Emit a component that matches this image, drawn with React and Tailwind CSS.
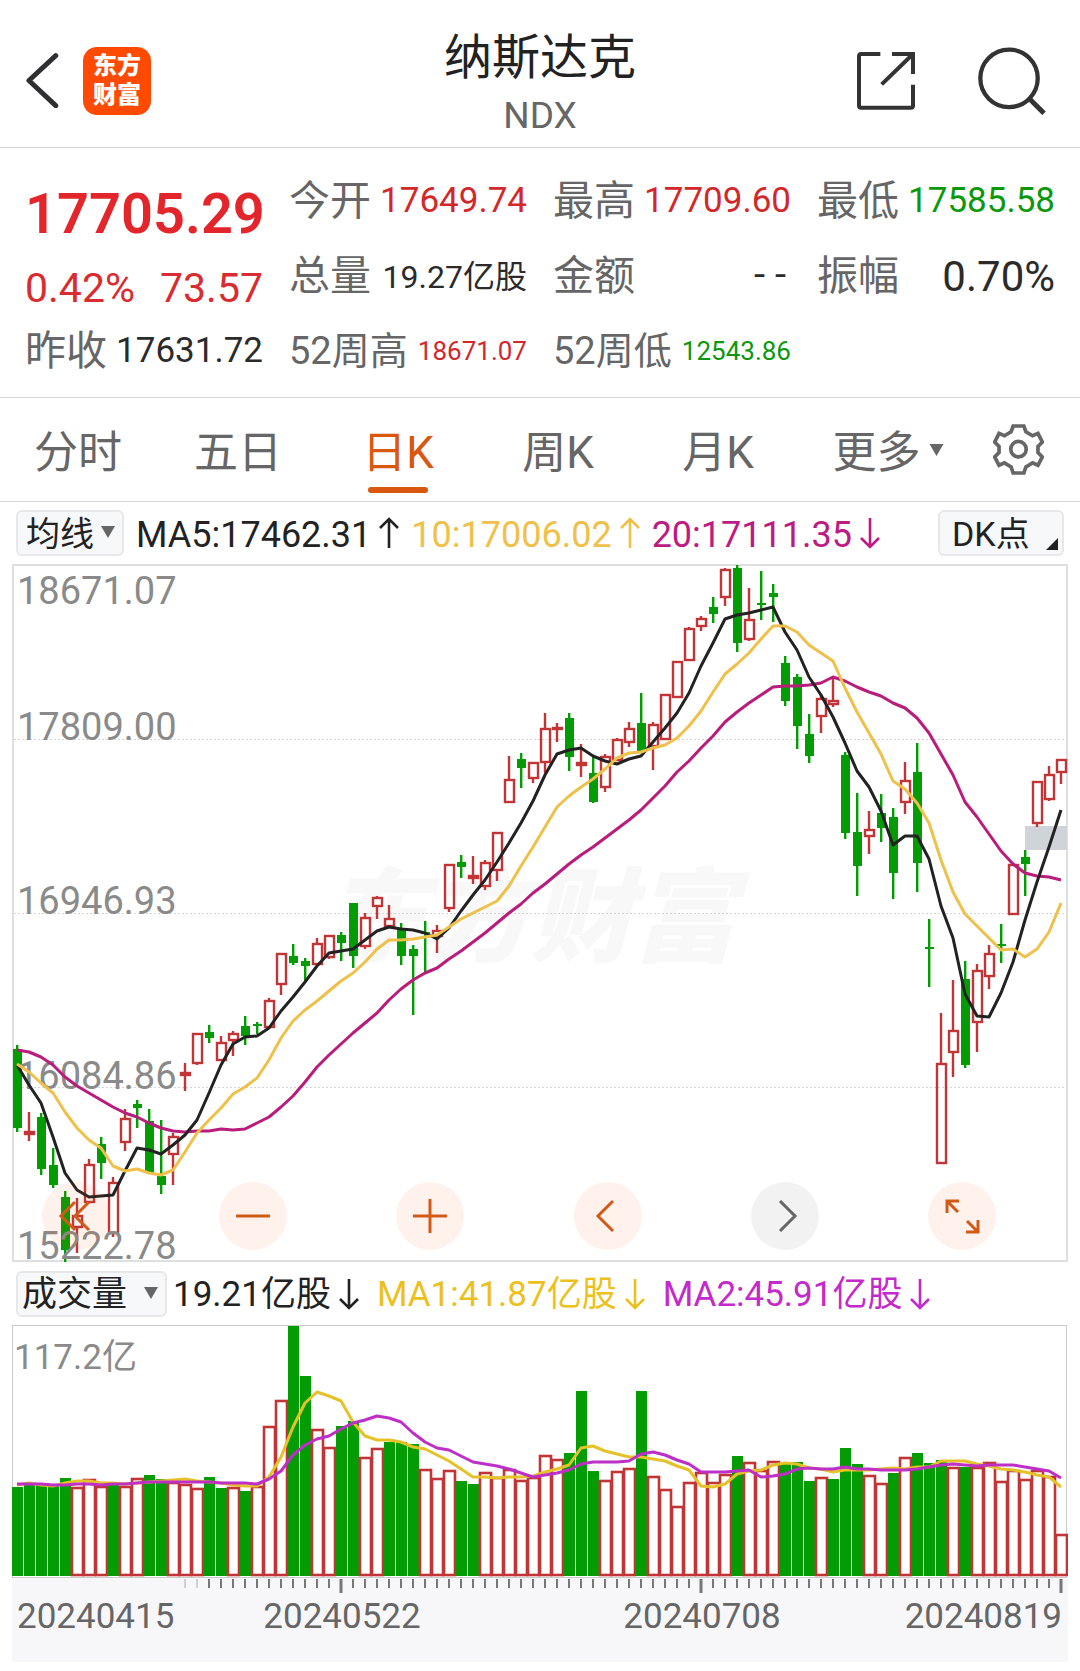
import { useState } from "react";
import clsx from "clsx";

const UP = "#c23537";
const DOWN = "#049c04";

const STEP = 12;
const FIRST_X = 17;
const xAt = (i) => FIRST_X + i * STEP;

// [direction, high, body top, body bottom, low]
const CANDLES = [
  ["d", 1045, 1049, 1128, 1132], ["u", 1112, 1132, 1134, 1141], ["d", 1113, 1117, 1169, 1175], ["d", 1148, 1165, 1185, 1188],
  ["d", 1191, 1197, 1250, 1262], ["u", 1198, 1216, 1227, 1253], ["u", 1159, 1165, 1202, 1203], ["d", 1137, 1144, 1163, 1179],
  ["u", 1177, 1183, 1233, 1237], ["u", 1109, 1119, 1142, 1151], ["d", 1100, 1104, 1108, 1128], ["d", 1109, 1121, 1173, 1174],
  ["d", 1120, 1176, 1185, 1194], ["u", 1133, 1137, 1154, 1185], ["u", 1063, 1073, 1075, 1091], ["u", 1034, 1034, 1063, 1065],
  ["d", 1025, 1032, 1038, 1043], ["u", 1036, 1043, 1060, 1061], ["u", 1031, 1034, 1040, 1056], ["d", 1016, 1026, 1036, 1045],
  ["d", 1022, 1024, 1026, 1034], ["u", 998, 1001, 1027, 1027], ["u", 953, 954, 984, 995], ["d", 944, 956, 963, 965],
  ["d", 958, 961, 966, 981], ["u", 938, 944, 964, 964], ["u", 935, 936, 957, 959], ["d", 932, 935, 943, 961],
  ["d", 903, 903, 956, 968], ["u", 913, 918, 946, 949], ["u", 896, 898, 906, 919], ["u", 905, 919, 926, 927],
  ["d", 923, 928, 956, 965], ["d", 945, 949, 956, 1015], ["d", 921, 932, 934, 973], ["u", 925, 931, 936, 953],
  ["u", 864, 865, 908, 912], ["d", 855, 862, 867, 878], ["u", 856, 876, 878, 884], ["u", 860, 863, 886, 890],
  ["u", 832, 833, 870, 881], ["u", 756, 780, 802, 803], ["d", 753, 759, 768, 788], ["u", 763, 763, 778, 783],
  ["u", 713, 729, 762, 773], ["u", 723, 728, 729, 742], ["d", 713, 718, 757, 771], ["u", 744, 763, 765, 777],
  ["d", 757, 773, 802, 803], ["u", 754, 757, 787, 792], ["u", 738, 740, 760, 760], ["u", 722, 729, 742, 747],
  ["d", 693, 723, 752, 753], ["u", 722, 725, 746, 770], ["u", 694, 695, 739, 740], ["u", 662, 662, 697, 698],
  ["u", 627, 629, 660, 660], ["u", 616, 619, 626, 631], ["d", 597, 607, 614, 623], ["u", 568, 570, 597, 606],
  ["d", 565, 568, 643, 652], ["u", 588, 620, 639, 641], ["d", 571, 603, 605, 620], ["d", 584, 593, 597, 622],
  ["d", 656, 663, 701, 706], ["d", 674, 677, 726, 749], ["d", 714, 734, 756, 763], ["u", 695, 699, 716, 733],
  ["u", 676, 701, 704, 707], ["d", 752, 755, 833, 839], ["d", 793, 832, 866, 896], ["u", 811, 830, 836, 854],
  ["d", 794, 813, 828, 842], ["d", 808, 817, 873, 899], ["u", 762, 781, 802, 814], ["d", 743, 772, 863, 892],
  ["d", 919, 947, 949, 987], ["u", 1013, 1064, 1163, 1163], ["u", 980, 1031, 1052, 1077], ["d", 961, 979, 1065, 1068],
  ["u", 964, 971, 1022, 1052], ["u", 945, 954, 976, 989], ["d", 924, 944, 946, 963], ["u", 863, 865, 914, 914],
  ["d", 850, 857, 864, 896], ["u", 781, 782, 823, 827], ["u", 766, 775, 799, 801], ["u", 759, 760, 772, 784],
];

const MA5 = [
  1065, 1085, 1103, 1137, 1173, 1190, 1197, 1196, 1195, 1171, 1148, 1150, 1154, 1145, 1135, 1120, 1093, 1065, 1044, 1037,
  1036, 1028, 1011, 997, 982, 966, 953, 951, 949, 940, 931, 927, 929, 930, 933, 939, 928, 911, 895, 880,
  862, 843, 823, 801, 775, 754, 750, 748, 756, 761, 764, 759, 756, 742, 728, 713, 693, 666, 643, 619,
  615, 613, 610, 607, 632, 650, 677, 695, 717, 743, 771, 787, 811, 845, 836, 836, 859, 906, 938, 994,
  1016, 1017, 993, 962, 920, 882, 847, 810,
];

const MA10 = [
  1064, 1072, 1083, 1093, 1112, 1128, 1140, 1148, 1166, 1171, 1169, 1173, 1175, 1170, 1152, 1133, 1120, 1108, 1094, 1087,
  1078, 1060, 1038, 1021, 1010, 1001, 991, 981, 973, 962, 949, 940, 940, 939, 937, 935, 927, 919, 913, 907,
  901, 886, 866, 847, 827, 807, 796, 787, 779, 769, 758, 753, 752, 748, 745, 738, 726, 711, 692, 674,
  664, 653, 639, 626, 626, 632, 645, 653, 661, 688, 712, 733, 754, 781, 789, 803, 823, 860, 892, 914,
  926, 938, 950, 949, 957, 949, 932, 903,
];

const MA20 = [
  1050, 1052, 1057, 1065, 1077, 1086, 1093, 1100, 1107, 1113, 1117, 1123, 1128, 1131, 1132, 1131, 1131, 1129, 1130, 1129,
  1123, 1117, 1107, 1096, 1082, 1067, 1055, 1044, 1033, 1023, 1013, 1000, 989, 980, 973, 968, 959, 951, 942, 933,
  923, 913, 904, 893, 884, 874, 864, 855, 847, 838, 829, 820, 810, 798, 786, 772, 761, 748, 736, 722,
  712, 703, 695, 687, 686, 686, 685, 683, 677, 681, 687, 692, 696, 703, 708, 718, 733, 754, 775, 802,
  817, 834, 851, 864, 873, 876, 877, 880,
];

// top edge of each volume bar
const VOLUMES = [
  162, 160, 160, 161, 153, 163, 155, 162, 160, 162, 154, 150, 154, 158, 160, 164, 152, 163, 163, 166,
  162, 102, 76, 1, 51, 105, 123, 101, 96, 133, 124, 117, 117, 119, 145, 154, 146, 156, 159, 148,
  153, 145, 156, 153, 131, 135, 128, 66, 146, 156, 147, 144, 66, 152, 165, 182, 158, 148, 158, 150,
  131, 138, 146, 137, 138, 137, 156, 153, 154, 123, 139, 151, 159, 148, 133, 128, 138, 135, 143, 142,
  143, 138, 157, 146, 155, 146, 152, 210,
];

const VOLUME_DOWN = new Set([
  0, 1, 2, 3, 4, 8, 11, 12, 16, 17, 19, 23, 24, 27, 28, 31, 32, 33, 37, 38, 46, 47, 48, 52, 60, 64, 65, 66, 68, 69, 70, 73,
  75, 76, 77, 79,
]);

const VOL_MA1 = [
  160, 158, 160, 161, 158, 156, 156, 158, 158, 159, 158, 157, 156, 155, 154, 156, 157, 158, 160, 161,
  161, 152, 132, 102, 78, 67, 71, 76, 97, 111, 115, 115, 117, 122, 124, 130, 136, 144, 152, 152,
  153, 152, 152, 151, 147, 144, 140, 123, 121, 126, 129, 132, 132, 134, 136, 141, 145, 161, 162, 159,
  149, 146, 145, 140, 138, 139, 143, 144, 147, 145, 145, 145, 144, 143, 144, 142, 142, 136, 136, 136,
  139, 141, 144, 145, 147, 150, 152, 162,
];

const VOL_MA2 = [
  159, 159, 159, 160, 160, 159, 159, 160, 159, 159, 158, 157, 157, 157, 157, 157, 157, 158, 158, 158,
  159, 154, 146, 130, 120, 114, 111, 104, 98, 95, 91, 93, 97, 108, 117, 123, 125, 131, 137, 139,
  141, 144, 148, 152, 150, 148, 145, 139, 137, 137, 137, 136, 129, 127, 130, 135, 139, 147, 147, 147,
  146, 145, 152, 151, 149, 144, 143, 144, 144, 142, 144, 144, 145, 145, 145, 144, 142, 140, 139, 140,
  141, 140, 140, 140, 142, 144, 146, 153,
];

const PRICE_LABELS = [
  { text: "18671.07", y: 604 },
  { text: "17809.00", y: 740 },
  { text: "16946.93", y: 914 },
  { text: "16084.86", y: 1089 },
  { text: "15222.78", y: 1259 },
];

const GRID_LINES = [739, 913, 1087];

const DATES = [
  { text: "20240415", x: 17, anchor: "start" },
  { text: "20240522", x: 342, anchor: "middle" },
  { text: "20240708", x: 702, anchor: "middle" },
  { text: "20240819", x: 1062, anchor: "end" },
];

const QUOTES = [
  { label: "今开", value: "17649.74", style: "text-[35px] text-[#d2282b]" },
  { label: "最高", value: "17709.60", style: "text-[35px] text-[#d2282b]" },
  { label: "最低", value: "17585.58", style: "text-[35px] text-[#0c980c]" },
  { label: "总量", value: "19.27亿股", style: "text-[32px] text-[#2b2b2b]" },
  { label: "金额", value: "--", style: "font-['Liberation_Mono',monospace] text-[35px] text-[#2b2b2b]" },
  { label: "振幅", value: "0.70%", style: "text-[42px] text-[#2b2b2b]" },
  { label: "昨收", value: "17631.72", style: "text-[35px] text-[#2b2b2b]" },
  { label: "52周高", value: "18671.07", style: "text-[26px] text-[#d2282b]" },
  { label: "52周低", value: "12543.86", style: "text-[26px] text-[#0c980c]" },
];

const TABS = ["分时", "五日", "日K", "周K", "月K"];

const linePoints = (values) => values.map((y, i) => `${xAt(i)},${y}`).join(" ");

function Caret({ className }) {
  return (
    <svg viewBox="0 0 14 12" className={className} aria-hidden="true">
      <path d="M0 0H14L7 12Z" fill="#666" />
    </svg>
  );
}

function Trend({ down }) {
  return (
    <svg viewBox="0 0 20 32" className="h-8 w-5" fill="none" stroke="currentColor" strokeWidth="2.6" aria-hidden="true">
      {down ? <path d="M10 1V30M1 21L10 30L19 21" /> : <path d="M10 31V2M1 11L10 2L19 11" />}
    </svg>
  );
}

function Reading({ className, down, children }) {
  return (
    <span className={clsx("flex items-center gap-2 whitespace-nowrap", className)}>
      <span className="pt-1">{children}</span>
      <Trend down={down} />
    </span>
  );
}

function Picker({ label, options, className, caretClassName }) {
  return (
    <div className="relative">
      <select
        aria-label={label}
        className={clsx(
          "block h-[46px] appearance-none rounded-md border-2 border-[#e6e8ea] bg-[#f6f8fa] pt-[2px] leading-[40px] text-[#222] outline-none",
          className
        )}
      >
        {options.map((option) => (
          <option key={option}>{option}</option>
        ))}
      </select>
      <Caret className={clsx("pointer-events-none absolute top-4 h-3 w-[14px]", caretClassName)} />
    </div>
  );
}

function Quote({ label, value, style }) {
  return (
    <div className="flex h-[75px] items-center justify-between whitespace-nowrap">
      <dt className={clsx("text-[#666]", label.length > 2 ? "text-[38px]" : "text-[41px]")}>{label}</dt>
      <dd className={style}>{value}</dd>
    </div>
  );
}

function Header() {
  return (
    <header className="grid grid-cols-[1fr_auto_1fr] items-center border-b border-[#d6d6d6] pt-[26px] pb-3">
      <div className="flex items-center gap-6 pl-[26px]">
        <button aria-label="返回">
          <svg viewBox="80 68 98 166" className="h-[55px] w-[33px]" fill="none" stroke="#2f2f31" strokeWidth="15" strokeLinecap="round">
            <path d="M169 76L88 151L169 227" strokeLinejoin="round" />
          </svg>
        </button>
        <a
          href="#"
          className="flex h-[68px] w-[68px] items-center justify-center rounded-[14px] bg-[#ff4a04] text-2xl leading-[29px] font-black text-white"
        >
          <span className="w-12">东方财富</span>
        </a>
      </div>
      <div className="pt-1 text-center">
        <h1 className="text-[48px] leading-[56px] text-[#222]">纳斯达克</h1>
        <p className="mt-[10px] text-[37px] leading-[39px] text-[#666]">NDX</p>
      </div>
      <div className="flex items-center justify-end gap-[63px] pr-[34px]">
        <button aria-label="分享">
          <svg viewBox="173 65 174 174" className="h-[58px] w-[58px]" fill="none" stroke="#333" strokeWidth="12">
            <path d="M243 71H186Q179 71 179 78V226Q179 232 186 232H335Q341 232 341 226V163M278 71H341V131" />
            <path d="M341 71L247 162" />
          </svg>
        </button>
        <button aria-label="搜索">
          <svg viewBox="534 46 206 206" className="h-[68px] w-[68px]" fill="none" stroke="#333" strokeWidth="13">
            <circle cx="628" cy="141" r="87" />
            <path d="M689 202L734 247" strokeWidth="15" />
          </svg>
        </button>
      </div>
    </header>
  );
}

function Summary() {
  return (
    <section className="grid grid-cols-4 gap-x-[26px] border-b border-[#d6d6d6] px-[25px] pt-4 pb-2">
      <div className="row-span-2 text-[#e3262b]">
        <p className="flex h-[100px] items-center text-[56px] font-semibold">17705.29</p>
        <p className="flex h-[50px] items-center justify-between text-[41px] text-[#d92c30]">
          <span>0.42%</span>
          <span>73.57</span>
        </p>
      </div>
      {QUOTES.map((quote) => (
        <Quote key={quote.label} {...quote} />
      ))}
    </section>
  );
}

function Tabs({ active, onChange }) {
  return (
    <nav className="grid grid-cols-[repeat(6,4fr)_3fr] border-b border-[#d6d6d6] text-[44px] text-[#666]">
      {TABS.map((tab) => (
        <button
          key={tab}
          onClick={() => onChange(tab)}
          className={clsx("flex flex-col items-center pt-[22px] pr-1 pb-2", tab === active && "text-[#d9570f]")}
        >
          <span className="leading-[67px]">{tab}</span>
          <span className={clsx("h-[6px] w-[60px] rounded-full", tab === active && "bg-[#d9570f]")} />
        </button>
      ))}
      <button aria-haspopup="menu" className="flex items-start justify-center gap-2 pt-[22px] pl-4">
        <span className="leading-[67px]">更多</span>
        <Caret className="mt-6 h-3 w-[15px]" />
      </button>
      <button aria-label="设置" className="flex items-start justify-center pt-[26px] pr-1">
        <svg viewBox="0 0 152 152" className="h-[51px] w-[51px]" fill="none" stroke="#666" strokeWidth="11">
          <path d="M60 6H92L98 23L118 35L134 28L147 54L134 67V85L147 98L134 123L118 116L98 128L92 146H60L54 128L34 116L18 123L5 98L18 85V67L5 54L18 28L34 35L54 23Z" />
          <circle cx="76" cy="75" r="23" />
        </svg>
      </button>
    </nav>
  );
}

function PriceChart() {
  return (
    <svg viewBox="12 564 1056 698" className="block w-full overflow-visible" role="img" aria-label="日K线">
      <rect x="13" y="565" width="1054" height="696" fill="none" stroke="#dedfe0" strokeWidth="2" />
      <text x="530" y="954" textAnchor="middle" fontSize="103" fontWeight="900" fontStyle="italic" fill="#f8f8f8">
        东方财富
      </text>
      {GRID_LINES.map((y) => (
        <path key={y} d={`M14 ${y + 0.5}H1066`} stroke="#d4d4d4" strokeDasharray="2 2" />
      ))}
      <rect x="1025" y="826" width="42" height="24" fill="#d0d3d8" />

      {CANDLES.map(([dir, high, top, bottom, low], i) => {
        const x = xAt(i);
        if (dir === "d") {
          return (
            <g key={i} fill={DOWN}>
              <rect x={x - 1} y={high} width="2.4" height={low - high} />
              <rect x={x - 4} y={top} width="9" height={bottom - top} />
            </g>
          );
        }
        return (
          <g key={i} stroke={UP} strokeWidth="2.4" fill="none">
            <path d={`M${x} ${high}V${top}M${x} ${bottom}V${low}`} />
            <rect x={x - 4} y={top} width="9" height={bottom - top} />
          </g>
        );
      })}

      <g fontSize="38" fill="#8a8a8a">
        {PRICE_LABELS.map(({ text, y }) => (
          <text key={text} x="17" y={y}>
            {text}
          </text>
        ))}
      </g>

      <g fill="none" strokeWidth="3" strokeLinejoin="round">
        <polyline points={linePoints(MA20)} stroke="#b91c7b" />
        <polyline points={linePoints(MA5)} stroke="#222" />
        <polyline points={linePoints(MA10)} stroke="#efc04a" />
      </g>
    </svg>
  );
}

const CONTROLS = [
  { label: "最早", path: "M33 20L19 34L33 48M47 20L33 34L47 48" },
  { label: "缩小", path: "M17 34H51" },
  { label: "放大", path: "M17 34H51M34 17V51" },
  { label: "向左", path: "M39 19L24 34L39 49" },
  { label: "向右", path: "M29 19L44 34L29 49", muted: true },
  { label: "全屏", path: "M19 31V19H31M19 19L30 30M50 38V50H38M50 50L39 39" },
];

function ChartControls() {
  return (
    <div className="absolute right-[72px] bottom-3 left-[30px] flex justify-between">
      {CONTROLS.map(({ label, path, muted }) => (
        <button
          key={label}
          aria-label={label}
          className={clsx("h-[68px] w-[68px] rounded-full", muted ? "bg-black/5 text-[#666]" : "bg-[#ff5a0a]/8 text-[#d15a17]")}
        >
          <svg viewBox="0 0 68 68" fill="none" stroke="currentColor" strokeWidth="3">
            <path d={path} />
          </svg>
        </button>
      ))}
    </div>
  );
}

function VolumeChart() {
  return (
    <svg viewBox="12 0 1056 337" className="block w-full" role="img" aria-label="成交量">
      <rect x="12" y="252" width="1056" height="85" fill="#f7f7fa" />
      <rect x="12.5" y="0.5" width="1054" height="252" fill="#fff" stroke="#cbcbcb" />
      <text x="14" y="44" fontSize="35" fill="#8a8a8a">
        117.2亿
      </text>

      {VOLUMES.map((top, i) => {
        const x = xAt(i);
        return VOLUME_DOWN.has(i) ? (
          <rect key={i} x={x - 5} y={top} width="11" height={251 - top} fill={DOWN} />
        ) : (
          <rect key={i} x={x - 5} y={top} width="11" height={250 - top} fill="#fff" stroke={UP} strokeWidth="2.6" />
        );
      })}

      <g fill="none" strokeWidth="3" strokeLinejoin="round">
        <polyline points={linePoints(VOL_MA1)} stroke="#e6c229" />
        <polyline points={linePoints(VOL_MA2)} stroke="#bd2fc6" />
      </g>

      {VOLUMES.map((_, i) => {
        if (i < 14) return null;
        const major = i % 30 === 27;
        return (
          <path
            key={i}
            d={`M${xAt(i)} 254V${major ? 268 : 263}`}
            stroke="#777"
            strokeWidth={major ? 3 : 2}
            opacity={i < 16 ? 0.3 : 1}
          />
        );
      })}

      <g fontSize="35" fill="#666">
        {DATES.map(({ text, x, anchor }) => (
          <text key={text} x={x} y="303" textAnchor={anchor}>
            {text}
          </text>
        ))}
      </g>
    </svg>
  );
}

export default function App() {
  const [tab, setTab] = useState("日K");

  return (
    <main lang="zh-CN" className="w-full bg-white pb-2 font-[Roboto,'Noto_Sans_CJK_SC',sans-serif]">
      <Header />
      <Summary />
      <Tabs active={tab} onChange={setTab} />

      <div className="flex h-[62px] items-center gap-3 px-4 text-[36px]">
        <Picker label="主图指标" options={["均线", "BOLL"]} className="w-[108px] pl-2 text-[34px]" caretClassName="right-[9px]" />
        <Reading className="text-[#222]">MA5:17462.31</Reading>
        <Reading className="text-[#efc04a]">10:17006.02</Reading>
        <Reading className="text-[#bd1a83]" down>
          20:17111.35
        </Reading>
        <button className="relative ml-auto flex h-[46px] w-[126px] items-center rounded-md border-2 border-[#e6e8ea] bg-[#f6f8fa] pt-[2px] pl-3 text-[34px] text-[#222]">
          DK点
          <svg viewBox="0 0 12 12" className="absolute right-1 bottom-1 h-3 w-3" aria-hidden="true">
            <path d="M12 0V12H0Z" fill="#222" />
          </svg>
        </button>
      </div>

      <div className="relative mx-3">
        <PriceChart />
        <ChartControls />
      </div>

      <div className="flex h-[63px] items-center gap-[18px] px-4 text-[35px]">
        <Picker label="副图指标" options={["成交量", "MACD"]} className="w-[151px] pl-1 text-[35px]" caretClassName="right-[9px]" />
        <Reading className="-ml-3 text-[#222]" down>
          19.21亿股
        </Reading>
        <Reading className="text-[#ecc11d]" down>
          MA1:41.87亿股
        </Reading>
        <Reading className="text-[#c32acb]" down>
          MA2:45.91亿股
        </Reading>
      </div>

      <div className="mx-3">
        <VolumeChart />
      </div>
    </main>
  );
}
